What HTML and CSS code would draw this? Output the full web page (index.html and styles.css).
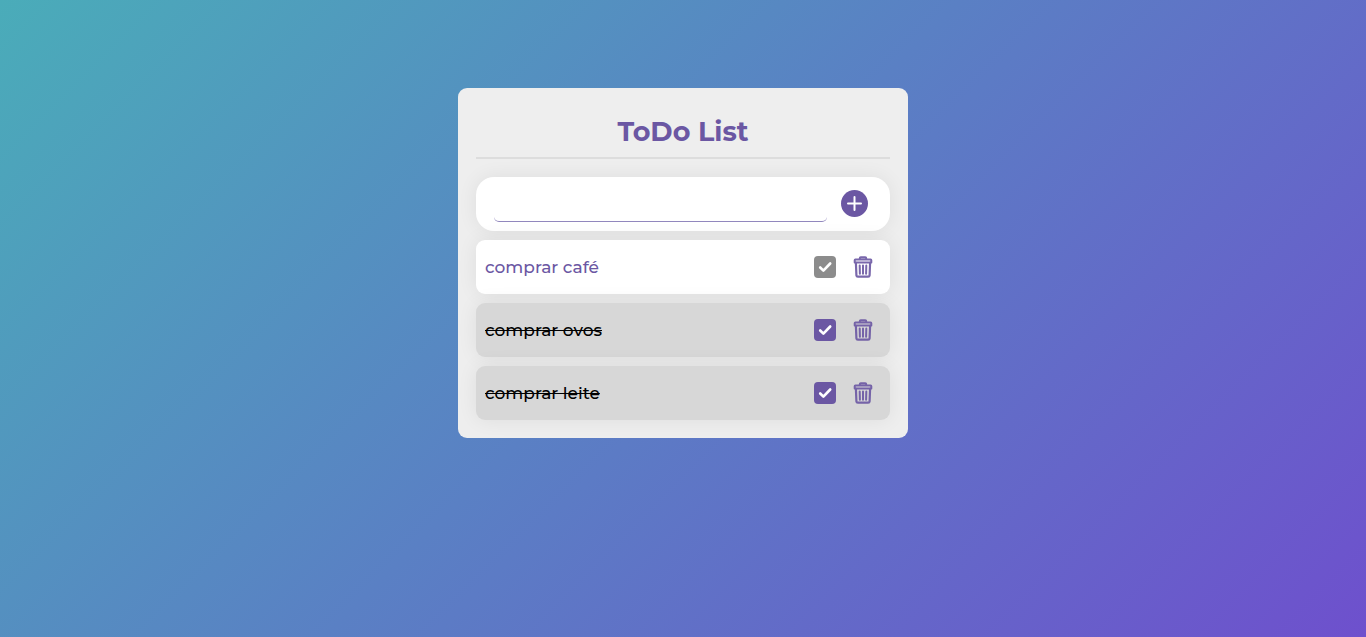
FILE: index.html
```html
<!DOCTYPE html>
<html lang="pt-BR">
<head>
<meta charset="utf-8">
<meta name="viewport" content="width=device-width, initial-scale=1">
<title>ToDo List</title>
<link rel="stylesheet" href="styles.css">
</head>
<body>
<svg class="sprite" aria-hidden="true">
  <symbol id="trash" viewBox="0 0 20 22">
    <g fill="none" stroke="currentColor" stroke-linejoin="round" stroke-linecap="round">
      <path stroke-width="2" d="M6.8 3V2.2Q6.8 1.2 7.8 1.2h4.4q1 0 1 1V3M2.4 3.5h15.2q.7 0 .7.7v2.2H1.7V4.2q0-.7.7-.7z"/>
      <path stroke-width="2.2" d="M2.9 6.8l.5 12.5q.1 1.4 1.5 1.4h10.2q1.4 0 1.5-1.4l.5-12.5"/>
      <path stroke-width="2" d="M6.7 9.4l.2 8.4M10 9.4v8.4M13.3 9.4l-.2 8.4"/>
    </g>
  </symbol>
</svg>
<main class="card">
  <h1 class="title">ToDo List</h1>
  <form class="add-form">
    <input class="add-input" type="text" aria-label="Nova tarefa">
    <button class="add-button" type="button" aria-label="Adicionar">
      <svg class="plus" viewBox="0 0 27 27"><circle cx="13.5" cy="13.5" r="13.5" fill="currentColor"/><path d="M13.5 7v13M7 13.5h13" stroke="#fff" stroke-width="2" stroke-linecap="round"/></svg>
    </button>
  </form>
  <ul class="tasks">
    <li class="task">
      <label class="task-name" for="t1">comprar café</label>
      <input class="check" id="t1" type="checkbox">
      <button class="delete" type="button" aria-label="Excluir comprar café"><svg class="trash"><use href="#trash"/></svg></button>
    </li>
    <li class="task done">
      <label class="task-name" for="t2">comprar ovos</label>
      <input class="check" id="t2" type="checkbox" checked>
      <button class="delete" type="button" aria-label="Excluir comprar ovos"><svg class="trash"><use href="#trash"/></svg></button>
    </li>
    <li class="task done">
      <label class="task-name" for="t3">comprar leite</label>
      <input class="check" id="t3" type="checkbox" checked>
      <button class="delete" type="button" aria-label="Excluir comprar leite"><svg class="trash"><use href="#trash"/></svg></button>
    </li>
  </ul>
</main>
</body>
</html>
```
FILE: styles.css
```css
* {
  box-sizing: border-box;
  margin: 0;
  padding: 0;
}

body {
  min-height: 100vh;
  padding: 88px 18px;
  font-family: Montserrat, Inter, sans-serif;
  color: #6b57a3;
  background: linear-gradient(135deg, #4aacb9, #5a80c4 48%, #6e50cd);
}

.sprite {
  display: none;
}

.card {
  max-width: 450px;
  margin: 0 auto;
  padding: 18px;
  border-radius: 9px;
  background: #eee;
}

.title {
  padding: 9px 0;
  margin-bottom: 18px;
  border-bottom: 2px solid #ddd;
  font-size: 27px;
  font-weight: 700;
  line-height: 33px;
  text-align: center;
}

.add-form,
.task {
  display: flex;
  align-items: center;
  height: 54px;
  background: #fff;
  box-shadow: 0 0 20px rgba(0, 0, 0, 0.07);
}

.add-form {
  gap: 14px;
  padding: 0 22px 1px 18px;
  border-radius: 18px;
}

.add-input {
  flex: 1;
  min-width: 0;
  height: 36px;
  border: 0;
  border-bottom: 1px solid #9187bd;
  border-radius: 5px;
  outline: 0;
  background: transparent;
  font: inherit;
  color: inherit;
}

.add-button,
.delete {
  display: flex;
  border: 0;
  background: none;
  color: #6b57a3;
  cursor: pointer;
}

.plus {
  width: 27px;
  height: 27px;
}

.tasks {
  display: grid;
  gap: 9px;
  margin-top: 9px;
  list-style: none;
}

.task {
  gap: 17px;
  padding: 0 17px 0 9px;
  border-radius: 9px;
}

.task-name {
  flex: 1;
  font-size: 17px;
  font-weight: 500;
  line-height: 22px;
}

.done {
  background: #d7d7d7;
}

.done .task-name {
  color: #000;
  text-decoration: line-through;
}

.check {
  appearance: none;
  width: 22px;
  height: 22px;
  border-radius: 4px;
  background: #8c8c8c url("data:image/svg+xml,%3Csvg xmlns='http://www.w3.org/2000/svg' viewBox='0 0 22 22'%3E%3Cpath d='M6.2 11.5l3.2 3.2 6.8-7.2' fill='none' stroke='white' stroke-width='2.6' stroke-linecap='round' stroke-linejoin='round'/%3E%3C/svg%3E") center / 22px no-repeat;
  cursor: pointer;
}

.check:checked {
  background-color: #6b57a3;
}

.trash {
  width: 20px;
  height: 22px;
  opacity: 0.9;
}
```
